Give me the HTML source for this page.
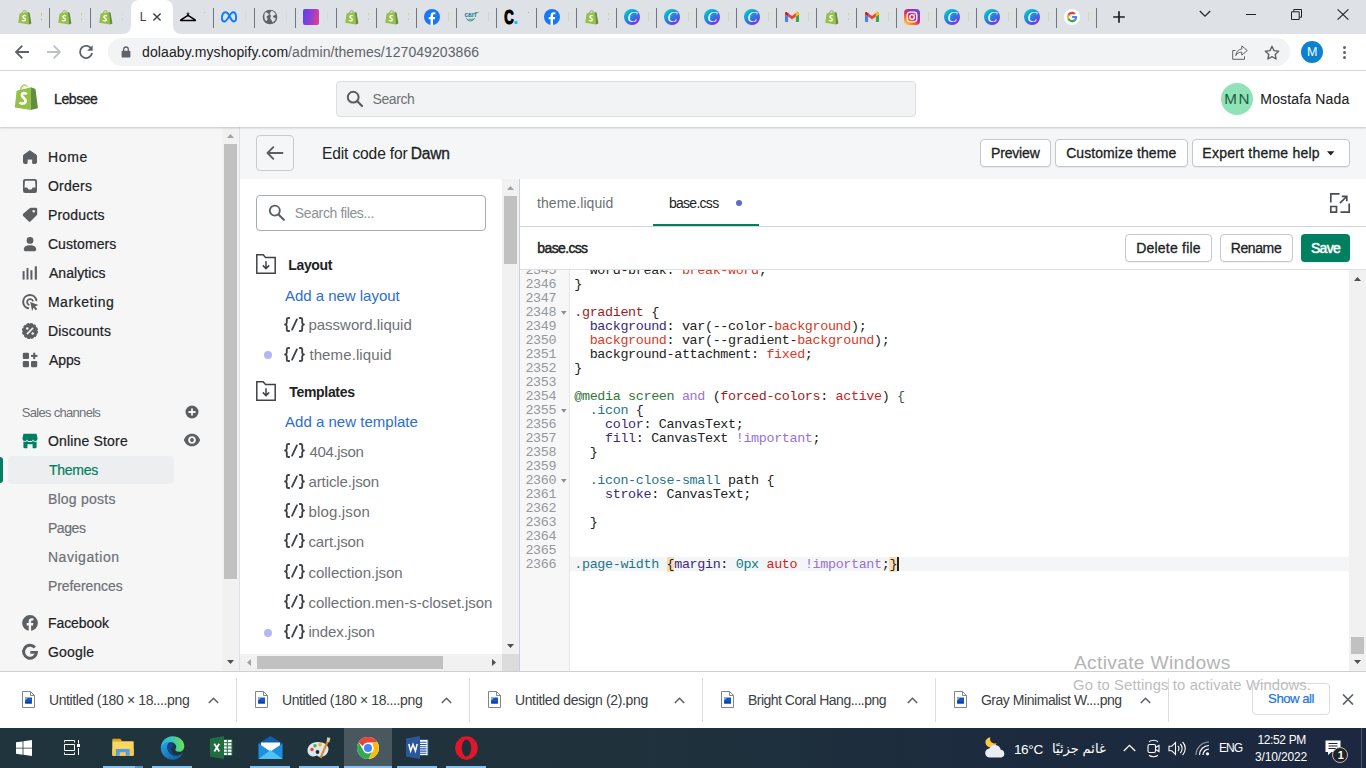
<!DOCTYPE html>
<html lang="en">
<head>
<meta charset="utf-8">
<title>Lebsee ~ Edit code ~ Shopify</title>
<style>
*{box-sizing:border-box;margin:0;padding:0}
html,body{width:1366px;height:768px;overflow:hidden;background:#fff}
body{font-family:"Liberation Sans","DejaVu Sans",sans-serif;color:#202223;position:relative;font-size:14px}
.abs{position:absolute}
.t{position:absolute;white-space:pre;line-height:20px;height:20px}
#tabstrip{position:absolute;left:0;top:0;width:1366px;height:34px;background:#dee1e6}
#toolbar{position:absolute;left:0;top:34px;width:1366px;height:37px;background:#fff;border-bottom:1px solid #d9dadc}
#omni{position:absolute;left:108px;top:38px;width:1182px;height:28px;border-radius:14px;background:#f1f3f4}
#topbar{position:absolute;left:0;top:71px;width:1366px;height:56px;background:#fff;box-shadow:0 1px 2px rgba(0,0,0,.2);z-index:5}
#search{position:absolute;left:336px;top:81px;width:580px;height:36px;border:1px solid #dcdee0;border-radius:4px;background:#f2f3f4;z-index:6}
#avatar{position:absolute;left:1221px;top:83px;width:32px;height:32px;border-radius:16px;background:#8fe3b6;z-index:6}
#nav{position:absolute;left:0;top:127px;width:222px;height:544px;background:#f6f6f7}
#main{position:absolute;left:240px;top:127px;width:1126px;height:544px;background:#f4f6f8}
.btn{position:absolute;border:1px solid #c4c8cc;border-radius:4px;background:#fff;box-shadow:0 1px 0 rgba(0,0,0,.05)}
#files{position:absolute;left:240px;top:179px;width:262px;height:475px;background:#fff}
#editor{position:absolute;left:520px;top:179px;width:846px;height:492px;background:#fff}
#code{position:absolute;left:520px;top:270px;width:830px;height:401px;overflow:hidden;background:#fff;font-family:"Liberation Mono","DejaVu Sans Mono",monospace;font-size:13.4px;line-height:14px;letter-spacing:-0.351px}
#gutter{position:absolute;left:0;top:0;width:50px;height:401px;background:#f7f7f7;border-right:1px solid #e6e6e6}
.ln{position:absolute;left:5.4px;color:#95989b;white-space:pre}
.cl{position:absolute;left:54.3px;white-space:pre;color:#202223}
.r{color:#a01b1b}.r2{color:#c81e1e}.p{color:#3c2a78}.t2{color:#1a6e7a}.v{color:#9a70d6}.n{color:#0c7c86}.o{color:#d8391f}.g{color:#33743a}.g2{color:#3a5a3a}
.cl .t{position:static;color:#1f7587;line-height:14px;height:auto}
.hl{background:#fbdcb0}
#dl{position:absolute;left:0;top:671px;width:1366px;height:57px;background:#fff;border-top:1px solid #cfcfcf}
#task{position:absolute;left:0;top:728px;width:1366px;height:40px;background:linear-gradient(90deg,#20343d 0%,#1f323c 45%,#1c2a3e 75%,#1b2840 100%)}
</style>
</head>
<body>
<div id="tabstrip">
<div class="abs" style="left:48.8px;top:7.500px;width:1.200px;height:20px;background:#73767c"></div>
<div class="abs" style="left:89.9px;top:7.500px;width:1.200px;height:20px;background:#73767c"></div>
<div class="abs" style="left:212.9px;top:7.500px;width:1.200px;height:20px;background:#73767c"></div>
<div class="abs" style="left:253.9px;top:7.500px;width:1.200px;height:20px;background:#73767c"></div>
<div class="abs" style="left:294.9px;top:7.500px;width:1.200px;height:20px;background:#73767c"></div>
<div class="abs" style="left:335.8px;top:7.500px;width:1.200px;height:20px;background:#73767c"></div>
<div class="abs" style="left:375.8px;top:7.500px;width:1.200px;height:20px;background:#73767c"></div>
<div class="abs" style="left:415.8px;top:7.500px;width:1.200px;height:20px;background:#73767c"></div>
<div class="abs" style="left:455.8px;top:7.500px;width:1.200px;height:20px;background:#73767c"></div>
<div class="abs" style="left:495.8px;top:7.500px;width:1.200px;height:20px;background:#73767c"></div>
<div class="abs" style="left:535.8px;top:7.500px;width:1.200px;height:20px;background:#73767c"></div>
<div class="abs" style="left:575.8px;top:7.500px;width:1.200px;height:20px;background:#73767c"></div>
<div class="abs" style="left:615.8px;top:7.500px;width:1.200px;height:20px;background:#73767c"></div>
<div class="abs" style="left:655.8px;top:7.500px;width:1.200px;height:20px;background:#73767c"></div>
<div class="abs" style="left:695.8px;top:7.500px;width:1.200px;height:20px;background:#73767c"></div>
<div class="abs" style="left:735.8px;top:7.500px;width:1.200px;height:20px;background:#73767c"></div>
<div class="abs" style="left:775.8px;top:7.500px;width:1.200px;height:20px;background:#73767c"></div>
<div class="abs" style="left:815.8px;top:7.500px;width:1.200px;height:20px;background:#73767c"></div>
<div class="abs" style="left:855.8px;top:7.500px;width:1.200px;height:20px;background:#73767c"></div>
<div class="abs" style="left:895.8px;top:7.500px;width:1.200px;height:20px;background:#73767c"></div>
<div class="abs" style="left:935.8px;top:7.500px;width:1.200px;height:20px;background:#73767c"></div>
<div class="abs" style="left:975.8px;top:7.500px;width:1.200px;height:20px;background:#73767c"></div>
<div class="abs" style="left:1015.8px;top:7.500px;width:1.200px;height:20px;background:#73767c"></div>
<div class="abs" style="left:1055.8px;top:7.500px;width:1.200px;height:20px;background:#73767c"></div>
<div class="abs" style="left:1095.8px;top:7.500px;width:1.200px;height:20px;background:#73767c"></div>
<div class="abs" style="left:131px;top:0;width:42px;height:34px;background:#fff;border-radius:8px 8px 0 0"></div>
<svg class="abs" style="left:123px;top:26px;width:8px;height:8px" viewBox="0 0 8 8"><path fill="#fff" d="M8 0v8H0A8 8 0 0 0 8 0z"/></svg>
<svg class="abs" style="left:173px;top:26px;width:8px;height:8px" viewBox="0 0 8 8"><path fill="#fff" d="M0 0v8h8A8 8 0 0 1 0 0z"/></svg>
<svg class="abs" style="left:16.5px;top:9px;width:16px;height:16px" viewBox="0 0 16 16"><path fill="none" stroke="#7fa83a" stroke-width="0.9" d="M5.300 4.300C5.300 1.700 8.600 0.500 9.700 3.400"/><path fill="#95bf47" d="M2.600 4.400L10.900 3.100 12 15.400 1.200 13.700z"/><path fill="#5e8e3e" d="M10.900 3.100l1.700.6 1.800 10.700-2.400 1z"/><path fill="none" stroke="#fff" stroke-width="1.350" d="M8.700 7.100C7.900 6.200 5.700 6.400 5.900 7.900 6.100 9.300 8.500 9.100 8.300 10.900 8.100 12.300 5.700 12.200 4.800 11.100"/></svg>
<span class="abs" style="left:40.4px;top:9px;width:1.600px;height:16px;overflow:hidden;font-size:12px;line-height:16px;color:#c98a4a;opacity:.8">S</span>
<svg class="abs" style="left:56.9px;top:9px;width:16px;height:16px" viewBox="0 0 16 16"><path fill="none" stroke="#7fa83a" stroke-width="0.9" d="M5.300 4.300C5.300 1.700 8.600 0.500 9.700 3.400"/><path fill="#95bf47" d="M2.600 4.400L10.900 3.100 12 15.400 1.200 13.700z"/><path fill="#5e8e3e" d="M10.900 3.100l1.700.6 1.800 10.700-2.400 1z"/><path fill="none" stroke="#fff" stroke-width="1.350" d="M8.700 7.100C7.900 6.200 5.700 6.400 5.900 7.900 6.100 9.300 8.500 9.100 8.300 10.900 8.100 12.300 5.700 12.200 4.800 11.100"/></svg>
<span class="abs" style="left:80.8px;top:9px;width:1.600px;height:16px;overflow:hidden;font-size:12px;line-height:16px;color:#c98a4a;opacity:.8">S</span>
<svg class="abs" style="left:98.0px;top:9px;width:16px;height:16px" viewBox="0 0 16 16"><path fill="none" stroke="#7fa83a" stroke-width="0.9" d="M5.300 4.300C5.300 1.700 8.600 0.500 9.700 3.400"/><path fill="#95bf47" d="M2.600 4.400L10.900 3.100 12 15.400 1.200 13.700z"/><path fill="#5e8e3e" d="M10.900 3.100l1.700.6 1.800 10.700-2.400 1z"/><path fill="none" stroke="#fff" stroke-width="1.350" d="M8.700 7.100C7.900 6.200 5.700 6.400 5.900 7.900 6.100 9.300 8.500 9.100 8.300 10.900 8.100 12.300 5.700 12.200 4.800 11.100"/></svg>
<span class="abs" style="left:121.9px;top:9px;width:1.600px;height:16px;overflow:hidden;font-size:12px;line-height:16px;color:#c98a4a;opacity:.8">S</span>
<span class="t" style="left:139.70px;top:7.34px;font-size:12px;color:#3c4043;">L</span>
<svg class="abs" style="left:152px;top:12px;width:10px;height:10px" viewBox="0 0 10 10"><path stroke="#3c4043" stroke-width="1.400" d="M1.400 1.400l7.200 7.200M8.600 1.400L1.400 8.600"/></svg>
<svg class="abs" style="left:180.0px;top:9px;width:16px;height:16px" viewBox="0 0 16 16"><circle cx="8" cy="4.800" r=".9" fill="none" stroke="#000" stroke-width="1"/><path fill="none" stroke="#000" stroke-width="1.500" stroke-linejoin="round" stroke-linecap="round" d="M8 6.300L.9 10.900c-.5.300-.3.700.2.700H14.900c.5 0 .7-.4.200-.7z"/></svg>
<span class="abs" style="left:203.9px;top:9px;width:1.600px;height:16px;overflow:hidden;font-size:12px;line-height:16px;color:#c9908a;opacity:.8">Y</span>
<svg class="abs" style="left:221.0px;top:9px;width:16px;height:16px" viewBox="0 0 16 16"><path fill="none" stroke="#0a7cff" stroke-width="1.900" d="M8 6C6.800 3.800 5.600 3.300 4.400 3.300 2.300 3.300.9 6 .9 9c0 2.200 1 3.500 2.500 3.500C5 12.500 6 11 8 7.500 10 4 11 3.300 12.200 3.300 14 3.300 15.100 6 15.100 9c0 2.200-.9 3.500-2.300 3.500C11.300 12.500 10.200 11 8 6z"/></svg>
<span class="abs" style="left:244.9px;top:9px;width:1.600px;height:16px;overflow:hidden;font-size:12px;line-height:16px;color:#c9908a;opacity:.8">I</span>
<svg class="abs" style="left:262.0px;top:9px;width:16px;height:16px" viewBox="0 0 16 16"><circle cx="8" cy="8" r="7.300" fill="#5f6368"/><path fill="#dee1e6" d="M3 3.500c1.500-.2 2.700.3 3.500 1.300.6.800 0 1.700-.9 2-1 .3-1.300 1.300-.6 2 .8.800.7 1.800.1 2.800-.4.700-1 .6-1.500 0C2.300 10 1.800 7 3 3.500zM9.500 1.800c2 .5 3.700 2 4.300 4-.9.600-1.900.4-2.600 1.200-.7.800.3 1.700 1.300 1.700.9 0 1.300.8.900 1.700-.6 1.300-1.600 2.200-2.900 2.800-.7-.7-.5-1.700-1.300-2.400-.8-.8-1.300-1.700-.6-2.700.6-.8.400-1.700-.4-2.300-.8-.6-.3-1.900.3-2.600.4-.5.600-1 1-1.400z"/></svg>
<span class="abs" style="left:285.9px;top:9px;width:1.600px;height:16px;overflow:hidden;font-size:12px;line-height:16px;color:#c9908a;opacity:.8">I</span>
<div class="abs" style="left:303.0px;top:9px;width:16px;height:16px;border-radius:2px;background:linear-gradient(100deg,#5d3df0 0%,#8a3fd6 45%,#ea3f8a 100%)"></div>
<span class="abs" style="left:326.9px;top:9px;width:1.600px;height:16px;overflow:hidden;font-size:12px;line-height:16px;color:#c9908a;opacity:.8">I</span>
<svg class="abs" style="left:343.9px;top:9px;width:16px;height:16px" viewBox="0 0 16 16"><path fill="none" stroke="#7fa83a" stroke-width="0.9" d="M5.300 4.300C5.300 1.700 8.600 0.500 9.700 3.400"/><path fill="#95bf47" d="M2.600 4.400L10.900 3.100 12 15.400 1.200 13.700z"/><path fill="#5e8e3e" d="M10.900 3.100l1.700.6 1.800 10.700-2.400 1z"/><path fill="none" stroke="#fff" stroke-width="1.350" d="M8.700 7.100C7.900 6.200 5.700 6.400 5.900 7.900 6.100 9.300 8.500 9.100 8.300 10.900 8.100 12.300 5.700 12.200 4.800 11.100"/></svg>
<span class="abs" style="left:367.8px;top:9px;width:1.600px;height:16px;overflow:hidden;font-size:12px;line-height:16px;color:#c98a4a;opacity:.8">S</span>
<svg class="abs" style="left:383.9px;top:9px;width:16px;height:16px" viewBox="0 0 16 16"><path fill="none" stroke="#7fa83a" stroke-width="0.9" d="M5.300 4.300C5.300 1.700 8.600 0.500 9.700 3.400"/><path fill="#95bf47" d="M2.600 4.400L10.900 3.100 12 15.400 1.200 13.700z"/><path fill="#5e8e3e" d="M10.900 3.100l1.700.6 1.800 10.700-2.400 1z"/><path fill="none" stroke="#fff" stroke-width="1.350" d="M8.700 7.100C7.900 6.200 5.700 6.400 5.900 7.900 6.100 9.300 8.500 9.100 8.300 10.900 8.100 12.300 5.700 12.200 4.800 11.100"/></svg>
<span class="abs" style="left:407.8px;top:9px;width:1.600px;height:16px;overflow:hidden;font-size:12px;line-height:16px;color:#c98a4a;opacity:.8">S</span>
<svg class="abs" style="left:423.9px;top:9px;width:16px;height:16px" viewBox="0 0 16 16"><circle cx="8" cy="8" r="8" fill="#1877f2"/><path fill="#fff" d="M9 16V10.300h1.900l.35-2.300H9V6.600c0-.7.300-1.250 1.300-1.250h1.050V3.400c-.5-.08-1.100-.15-1.700-.15-1.900 0-3.050 1.150-3.050 3.150V8H4.700v2.300h1.900V16z"/></svg>
<span class="abs" style="left:447.8px;top:9px;width:1.600px;height:16px;overflow:hidden;font-size:12px;line-height:16px;color:#c9908a;opacity:.8">I</span>
<svg class="abs" style="left:463.9px;top:9px;width:16px;height:16px" viewBox="0 0 16 16"><text x="0.500" y="7.800" font-family="Liberation Sans,sans-serif" font-size="6.500" font-weight="bold" fill="#1a7f95">carf</text><path fill="none" stroke="#1a7f95" stroke-width="1" d="M2.500 9.300c1.500 3.500 6.500 3.500 8-.3"/><path fill="none" stroke="#4caf50" stroke-width="1" d="M11 3.500h3.500M4.500 10.300h5"/></svg>
<span class="abs" style="left:487.8px;top:9px;width:1.600px;height:16px;overflow:hidden;font-size:12px;line-height:16px;color:#c9908a;opacity:.8">I</span>
<svg class="abs" style="left:503.9px;top:9px;width:16px;height:16px" viewBox="0 0 16 16"><text transform="translate(0.300 15.300) scale(0.640 1)" font-family="Liberation Sans,sans-serif" font-size="20.500" font-weight="bold" fill="#000" stroke="#000" stroke-width="1.200">C</text><rect x="10.500" y="12" width="3" height="3" fill="#16c1f3"/></svg>
<span class="abs" style="left:527.8px;top:9px;width:1.600px;height:16px;overflow:hidden;font-size:12px;line-height:16px;color:#c9908a;opacity:.8">T</span>
<svg class="abs" style="left:543.9px;top:9px;width:16px;height:16px" viewBox="0 0 16 16"><circle cx="8" cy="8" r="8" fill="#1877f2"/><path fill="#fff" d="M9 16V10.300h1.900l.35-2.300H9V6.600c0-.7.300-1.250 1.300-1.250h1.050V3.400c-.5-.08-1.100-.15-1.700-.15-1.900 0-3.050 1.150-3.050 3.150V8H4.700v2.300h1.900V16z"/></svg>
<span class="abs" style="left:567.8px;top:9px;width:1.600px;height:16px;overflow:hidden;font-size:12px;line-height:16px;color:#c9908a;opacity:.8">I</span>
<svg class="abs" style="left:583.9px;top:9px;width:16px;height:16px" viewBox="0 0 16 16"><path fill="none" stroke="#7fa83a" stroke-width="0.9" d="M5.300 4.300C5.300 1.700 8.600 0.500 9.700 3.400"/><path fill="#95bf47" d="M2.600 4.400L10.900 3.100 12 15.400 1.200 13.700z"/><path fill="#5e8e3e" d="M10.900 3.100l1.700.6 1.800 10.700-2.400 1z"/><path fill="none" stroke="#fff" stroke-width="1.350" d="M8.700 7.100C7.900 6.200 5.700 6.400 5.900 7.900 6.100 9.300 8.500 9.100 8.300 10.900 8.100 12.300 5.700 12.200 4.800 11.100"/></svg>
<span class="abs" style="left:607.8px;top:9px;width:1.600px;height:16px;overflow:hidden;font-size:12px;line-height:16px;color:#c98a4a;opacity:.8">S</span>
<svg class="abs" style="left:623.9px;top:9px;width:16px;height:16px" viewBox="0 0 16 16"><defs><linearGradient id="cv0" x1="0.150" y1="0.100" x2="0.800" y2="0.950"><stop offset="0" stop-color="#00c4cc"/><stop offset="0.550" stop-color="#2a7de1"/><stop offset="1" stop-color="#7d2ae8"/></linearGradient></defs><circle cx="8" cy="8" r="8" fill="url(#cv0)"/><text x="8.300" y="13" text-anchor="middle" font-family="Liberation Serif,serif" font-style="italic" font-size="15" fill="#fff">C</text></svg>
<span class="abs" style="left:647.8px;top:9px;width:1.600px;height:16px;overflow:hidden;font-size:12px;line-height:16px;color:#c9908a;opacity:.8">I</span>
<svg class="abs" style="left:663.9px;top:9px;width:16px;height:16px" viewBox="0 0 16 16"><defs><linearGradient id="cv1" x1="0.150" y1="0.100" x2="0.800" y2="0.950"><stop offset="0" stop-color="#00c4cc"/><stop offset="0.550" stop-color="#2a7de1"/><stop offset="1" stop-color="#7d2ae8"/></linearGradient></defs><circle cx="8" cy="8" r="8" fill="url(#cv1)"/><text x="8.300" y="13" text-anchor="middle" font-family="Liberation Serif,serif" font-style="italic" font-size="15" fill="#fff">C</text></svg>
<span class="abs" style="left:687.8px;top:9px;width:1.600px;height:16px;overflow:hidden;font-size:12px;line-height:16px;color:#c9908a;opacity:.8">I</span>
<svg class="abs" style="left:703.9px;top:9px;width:16px;height:16px" viewBox="0 0 16 16"><defs><linearGradient id="cv2" x1="0.150" y1="0.100" x2="0.800" y2="0.950"><stop offset="0" stop-color="#00c4cc"/><stop offset="0.550" stop-color="#2a7de1"/><stop offset="1" stop-color="#7d2ae8"/></linearGradient></defs><circle cx="8" cy="8" r="8" fill="url(#cv2)"/><text x="8.300" y="13" text-anchor="middle" font-family="Liberation Serif,serif" font-style="italic" font-size="15" fill="#fff">C</text></svg>
<span class="abs" style="left:727.8px;top:9px;width:1.600px;height:16px;overflow:hidden;font-size:12px;line-height:16px;color:#c9908a;opacity:.8">I</span>
<svg class="abs" style="left:743.9px;top:9px;width:16px;height:16px" viewBox="0 0 16 16"><defs><linearGradient id="cv3" x1="0.150" y1="0.100" x2="0.800" y2="0.950"><stop offset="0" stop-color="#00c4cc"/><stop offset="0.550" stop-color="#2a7de1"/><stop offset="1" stop-color="#7d2ae8"/></linearGradient></defs><circle cx="8" cy="8" r="8" fill="url(#cv3)"/><text x="8.300" y="13" text-anchor="middle" font-family="Liberation Serif,serif" font-style="italic" font-size="15" fill="#fff">C</text></svg>
<span class="abs" style="left:767.8px;top:9px;width:1.600px;height:16px;overflow:hidden;font-size:12px;line-height:16px;color:#c9908a;opacity:.8">I</span>
<svg class="abs" style="left:783.9px;top:9px;width:16px;height:16px" viewBox="-1.100 -1.300 18.200 18.200"><path fill="#4285f4" d="M1 13.500h2.600V7.300L0 4.600v7.900c0 .55.450 1 1 1z"/><path fill="#34a853" d="M12.400 13.500H15c.55 0 1-.45 1-1V4.600l-3.600 2.700z"/><path fill="#fbbc04" d="M12.400 3.300v4L16 4.600V3.500c0-1.350-1.550-2.100-2.600-1.300z"/><path fill="#ea4335" d="M3.600 7.300v-4L8 6.600l4.400-3.300v4L8 10.600z"/><path fill="#c5221f" d="M0 3.500v1.100l3.600 2.700v-4l-1-.75C1.550 1.400 0 2.150 0 3.500z"/></svg>
<span class="abs" style="left:807.8px;top:9px;width:1.600px;height:16px;overflow:hidden;font-size:12px;line-height:16px;color:#c9908a;opacity:.8">I</span>
<svg class="abs" style="left:823.9px;top:9px;width:16px;height:16px" viewBox="0 0 16 16"><path fill="none" stroke="#7fa83a" stroke-width="0.9" d="M5.300 4.300C5.300 1.700 8.600 0.500 9.700 3.400"/><path fill="#95bf47" d="M2.600 4.400L10.900 3.100 12 15.400 1.200 13.700z"/><path fill="#5e8e3e" d="M10.900 3.100l1.700.6 1.800 10.700-2.400 1z"/><path fill="none" stroke="#fff" stroke-width="1.350" d="M8.700 7.100C7.900 6.200 5.700 6.400 5.900 7.900 6.100 9.300 8.500 9.100 8.300 10.900 8.100 12.300 5.700 12.200 4.800 11.100"/></svg>
<span class="abs" style="left:847.8px;top:9px;width:1.600px;height:16px;overflow:hidden;font-size:12px;line-height:16px;color:#c98a4a;opacity:.8">S</span>
<svg class="abs" style="left:863.9px;top:9px;width:16px;height:16px" viewBox="-1.100 -1.300 18.200 18.200"><path fill="#4285f4" d="M1 13.500h2.600V7.300L0 4.600v7.900c0 .55.450 1 1 1z"/><path fill="#34a853" d="M12.400 13.500H15c.55 0 1-.45 1-1V4.600l-3.600 2.700z"/><path fill="#fbbc04" d="M12.400 3.300v4L16 4.600V3.500c0-1.350-1.550-2.100-2.600-1.300z"/><path fill="#ea4335" d="M3.600 7.300v-4L8 6.600l4.400-3.300v4L8 10.600z"/><path fill="#c5221f" d="M0 3.500v1.100l3.600 2.700v-4l-1-.75C1.550 1.400 0 2.150 0 3.500z"/></svg>
<span class="abs" style="left:887.8px;top:9px;width:1.600px;height:16px;overflow:hidden;font-size:12px;line-height:16px;color:#c9908a;opacity:.8">I</span>
<svg class="abs" style="left:903.9px;top:9px;width:16px;height:16px" viewBox="0 0 16 16"><defs><linearGradient id="ig" x1="0.100" y1="1" x2="0.900" y2="0"><stop offset="0" stop-color="#feda75"/><stop offset="0.250" stop-color="#fa7e1e"/><stop offset="0.500" stop-color="#d62976"/><stop offset="0.750" stop-color="#962fbf"/><stop offset="1" stop-color="#4f5bd5"/></linearGradient></defs><rect width="16" height="16" rx="4" fill="url(#ig)"/><rect x="3.200" y="3.200" width="9.600" height="9.600" rx="2.700" fill="none" stroke="#fff" stroke-width="1.300"/><circle cx="8" cy="8" r="2.300" fill="none" stroke="#fff" stroke-width="1.300"/><circle cx="10.900" cy="5.100" r=".7" fill="#fff"/></svg>
<span class="abs" style="left:927.8px;top:9px;width:1.600px;height:16px;overflow:hidden;font-size:12px;line-height:16px;color:#c9908a;opacity:.8">I</span>
<svg class="abs" style="left:943.9px;top:9px;width:16px;height:16px" viewBox="0 0 16 16"><defs><linearGradient id="cv4" x1="0.150" y1="0.100" x2="0.800" y2="0.950"><stop offset="0" stop-color="#00c4cc"/><stop offset="0.550" stop-color="#2a7de1"/><stop offset="1" stop-color="#7d2ae8"/></linearGradient></defs><circle cx="8" cy="8" r="8" fill="url(#cv4)"/><text x="8.300" y="13" text-anchor="middle" font-family="Liberation Serif,serif" font-style="italic" font-size="15" fill="#fff">C</text></svg>
<span class="abs" style="left:967.8px;top:9px;width:1.600px;height:16px;overflow:hidden;font-size:12px;line-height:16px;color:#c9908a;opacity:.8">I</span>
<svg class="abs" style="left:983.9px;top:9px;width:16px;height:16px" viewBox="0 0 16 16"><defs><linearGradient id="cv5" x1="0.150" y1="0.100" x2="0.800" y2="0.950"><stop offset="0" stop-color="#00c4cc"/><stop offset="0.550" stop-color="#2a7de1"/><stop offset="1" stop-color="#7d2ae8"/></linearGradient></defs><circle cx="8" cy="8" r="8" fill="url(#cv5)"/><text x="8.300" y="13" text-anchor="middle" font-family="Liberation Serif,serif" font-style="italic" font-size="15" fill="#fff">C</text></svg>
<span class="abs" style="left:1007.8px;top:9px;width:1.600px;height:16px;overflow:hidden;font-size:12px;line-height:16px;color:#c9908a;opacity:.8">I</span>
<svg class="abs" style="left:1023.9px;top:9px;width:16px;height:16px" viewBox="0 0 16 16"><defs><linearGradient id="cv6" x1="0.150" y1="0.100" x2="0.800" y2="0.950"><stop offset="0" stop-color="#00c4cc"/><stop offset="0.550" stop-color="#2a7de1"/><stop offset="1" stop-color="#7d2ae8"/></linearGradient></defs><circle cx="8" cy="8" r="8" fill="url(#cv6)"/><text x="8.300" y="13" text-anchor="middle" font-family="Liberation Serif,serif" font-style="italic" font-size="15" fill="#fff">C</text></svg>
<span class="abs" style="left:1047.8px;top:9px;width:1.600px;height:16px;overflow:hidden;font-size:12px;line-height:16px;color:#c9908a;opacity:.8">I</span>
<svg class="abs" style="left:1063.9px;top:9px;width:16px;height:16px" viewBox="0 0 16 16"><circle cx="8" cy="8" r="8" fill="#fff"/><path fill="#4285f4" d="M13 8.150c0-.4-.03-.7-.1-1.050H8.100v1.950h2.800c-.1.650-.5 1.400-1.200 1.850l1.700 1.350C12.400 11.300 13 9.850 13 8.150z"/><path fill="#34a853" d="M8.100 13.200c1.400 0 2.550-.45 3.400-1.250l-1.700-1.350c-.45.300-1 .5-1.700.5-1.350 0-2.450-.9-2.850-2.100L3.500 10.350c.85 1.700 2.600 2.850 4.600 2.850z"/><path fill="#fbbc05" d="M5.250 9c-.1-.3-.15-.65-.15-1s.05-.7.150-1L3.500 5.650C3.150 6.350 2.950 7.150 2.950 8s.2 1.650.55 2.350z"/><path fill="#ea4335" d="M8.100 4.900c.95 0 1.600.4 1.950.75l1.500-1.450C10.650 3.350 9.500 2.800 8.100 2.800c-2 0-3.750 1.150-4.600 2.850L5.250 7c.4-1.200 1.500-2.100 2.850-2.100z"/></svg>
<span class="abs" style="left:1087.8px;top:9px;width:1.600px;height:16px;overflow:hidden;font-size:12px;line-height:16px;color:#c9908a;opacity:.8">I</span>
<svg class="abs" style="left:1112px;top:10px;width:14px;height:14px" viewBox="0 0 14 14"><path stroke="#202124" stroke-width="1.700" d="M7 1.200v11.600M1.200 7h11.600"/></svg>
<svg class="abs" style="left:1199px;top:9px;width:12px;height:10px" viewBox="0 0 12 10"><path fill="none" stroke="#202124" stroke-width="1.200" d="M.8 2l5.200 5.200L11.200 2"/></svg>
<div class="abs" style="left:1246px;top:14px;width:10px;height:1px;background:#202124"></div>
<svg class="abs" style="left:1291px;top:9px;width:11px;height:11px" viewBox="0 0 11 11"><path fill="none" stroke="#202124" stroke-width="1" d="M.5 2.800h7.700v7.700H.5zM2.800 2.800V.5h7.700v7.700H8.200"/></svg>
<svg class="abs" style="left:1337px;top:9px;width:12px;height:11px" viewBox="0 0 12 11"><path stroke="#202124" stroke-width="1.100" d="M.6.400l10.800 10.200M11.400.4L.6 10.600"/></svg>
</div>
<div id="toolbar"></div>
<svg class="abs" style="left:14px;top:44px;width:16px;height:16px" viewBox="0 0 16 16"><path fill="none" stroke="#5f6368" stroke-width="1.800" d="M15 8H2.500M8.300 1.700L2 8l6.300 6.300"/></svg>
<svg class="abs" style="left:46px;top:44px;width:16px;height:16px" viewBox="0 0 16 16"><path fill="none" stroke="#bdc1c6" stroke-width="1.800" d="M1 8h12.500M7.700 1.700L14 8l-6.300 6.300"/></svg>
<svg class="abs" style="left:78px;top:44px;width:16px;height:16px" viewBox="0 0 16 16"><path fill="none" stroke="#5f6368" stroke-width="1.800" d="M13.600 5.300A6.100 6.100 0 1 0 14.100 9"/><path fill="#5f6368" d="M14.600 1.300v5.500H9.100z"/></svg>
<div id="omni"></div>
<svg class="abs" style="left:121px;top:46px;width:10px;height:12px" viewBox="0 0 10 12"><path fill="none" stroke="#5f6368" stroke-width="1.300" d="M2.700 5V3.300a2.300 2.300 0 0 1 4.600 0V5"/><rect x=".6" y="4.700" width="8.800" height="6.800" rx="1" fill="#5f6368"/></svg>
<span class="t" style="left:142.10px;top:41.75px;font-size:14px;color:#202124;letter-spacing:0.090px;">dolaaby.myshopify.com</span>
<span class="t" style="left:288.10px;top:41.75px;font-size:14px;color:#5f6368;letter-spacing:0.072px;">/admin/themes/127049203866</span>
<svg class="abs" style="left:1232px;top:45px;width:16px;height:15px" viewBox="0 0 16 15"><path fill="none" stroke="#5f6368" stroke-width="1" stroke-linejoin="round" d="M3.500 5.500H.7v8.800h11.800v-3M9.800 4V.9l5.500 4.600-5.500 4.600V7.200C7.200 7.200 5 8 3.800 10.600 4.200 6.800 6.300 4.400 9.800 4z"/></svg>
<svg class="abs" style="left:1264px;top:45px;width:16px;height:15px" viewBox="0 0 16 15"><path fill="none" stroke="#5f6368" stroke-width="1.400" stroke-linejoin="round" d="M8 1.300l2 4.300 4.700.6-3.500 3.200.9 4.600L8 11.700l-4.100 2.300.9-4.600L1.300 6.200 6 5.600z"/></svg>
<div class="abs" style="left:1301px;top:41px;width:22px;height:22px;border-radius:11px;background:#0b82d1"></div>
<span class="t" style="left:1306.90px;top:41.97px;font-size:12.5px;color:#fff;">M</span>
<div class="abs" style="left:1343px;top:45.5px;width:3px;height:3px;border-radius:2px;background:#5f6368"></div>
<div class="abs" style="left:1343px;top:50.5px;width:3px;height:3px;border-radius:2px;background:#5f6368"></div>
<div class="abs" style="left:1343px;top:55.5px;width:3px;height:3px;border-radius:2px;background:#5f6368"></div>
<div id="topbar"></div>
<svg class="abs" style="left:14px;top:82px;width:25px;height:29px;z-index:6" viewBox="0 0 25 29"><path fill="none" stroke="#a9cf66" stroke-width="1.500" d="M6.700 8C7 3.500 11 1.300 13 4.500"/><path fill="none" stroke="#cfe6a6" stroke-width="1" d="M9.300 6.500C10 3.300 12.500 2.200 14.800 5"/><path fill="#95bf47" d="M2.600 8.700L17.100 5.200 16.600 28 .8 25.400z"/><path fill="#5e8e3e" d="M17.100 5.200l4.400 1.800 2.400 19.300-7.300 1.700z"/><path fill="none" stroke="#fff" stroke-width="2.600" d="M12.700 12.300C11.500 10.600 7.800 10.600 7.900 13.400 8 16 12 16 11.600 19.300 11.300 22 7.500 22.300 5.500 20.300"/></svg>
<span class="t" style="left:54.05px;top:89.35px;font-size:14px;color:#202223;letter-spacing:-0.420px;-webkit-text-stroke:0.3px;z-index:6;">Lebsee</span>
<div id="search"></div>
<svg class="abs" style="z-index:6;left:345px;top:89px;width:20px;height:20px" viewBox="0 0 20 20"><circle cx="8.200" cy="8.200" r="5.400" fill="none" stroke="#5c5f62" stroke-width="2"/><path stroke="#5c5f62" stroke-width="2.200" stroke-linecap="round" d="M12.300 12.300l4.700 4.700"/></svg>
<span class="t" style="left:372.60px;top:89.35px;font-size:14px;color:#6d7175;letter-spacing:-0.440px;z-index:6;">Search</span>
<div id="avatar"></div>
<span class="t" style="left:1224.20px;top:89.33px;font-size:15.2px;color:#1f5b45;letter-spacing:1.600px;z-index:6;">MN</span>
<span class="t" style="left:1260.35px;top:89.35px;font-size:14px;color:#202223;letter-spacing:0.164px;-webkit-text-stroke:0.1px;z-index:6;">Mostafa Nada</span>
<div id="nav"></div>
<span class="t" style="left:47.90px;top:147.15px;font-size:14px;color:#202223;letter-spacing:0.700px;-webkit-text-stroke:0.2px;">Home</span>
<span class="t" style="left:47.90px;top:176.15px;font-size:14px;color:#202223;letter-spacing:0.260px;-webkit-text-stroke:0.2px;">Orders</span>
<span class="t" style="left:47.90px;top:205.15px;font-size:14px;color:#202223;letter-spacing:0.200px;-webkit-text-stroke:0.2px;">Products</span>
<span class="t" style="left:47.90px;top:234.15px;font-size:14px;color:#202223;letter-spacing:0.100px;-webkit-text-stroke:0.2px;">Customers</span>
<span class="t" style="left:48.90px;top:263.15px;font-size:14px;color:#202223;letter-spacing:0.087px;-webkit-text-stroke:0.2px;">Analytics</span>
<span class="t" style="left:47.90px;top:292.15px;font-size:14px;color:#202223;letter-spacing:0.550px;-webkit-text-stroke:0.2px;">Marketing</span>
<span class="t" style="left:47.90px;top:321.15px;font-size:14px;color:#202223;letter-spacing:0.200px;-webkit-text-stroke:0.2px;">Discounts</span>
<span class="t" style="left:48.90px;top:350.15px;font-size:14px;color:#202223;letter-spacing:-0.067px;-webkit-text-stroke:0.2px;">Apps</span>
<svg class="abs" style="left:20px;top:147px;width:20px;height:20px" viewBox="0 0 20 20"><path fill="#5c5f62" stroke="#5c5f62" stroke-width="1" stroke-linejoin="round" d="M9.800 3.700L16.500 8.300V15.500a.9.900 0 0 1-.9.900H12.700V12.100H7.100V16.400H4.400a.9.900 0 0 1-.9-.9V8.300z"/></svg>
<svg class="abs" style="left:20px;top:176px;width:20px;height:20px" viewBox="0 0 20 20"><path fill="#5c5f62" fill-rule="evenodd" d="M5.200 2.900h9.600A2.200 2.200 0 0 1 17 5.100v9.700A2.200 2.200 0 0 1 14.800 17H5.200A2.200 2.200 0 0 1 3 14.800V5.100A2.200 2.200 0 0 1 5.200 2.900zM5.600 4.700a.7.700 0 0 0-.7.700L4.500 11.600H7.100L8.600 13.500h2.800l1.500-1.900h2.600L15.100 5.400a.7.700 0 0 0-.7-.7z"/></svg>
<svg class="abs" style="left:20px;top:205px;width:20px;height:20px" viewBox="0 0 20 20"><path fill="#5c5f62" fill-rule="evenodd" d="M10.800 2.800H16a1.200 1.200 0 0 1 1.200 1.200v5.200a1.600 1.600 0 0 1-.5 1.100l-6 6a1.600 1.600 0 0 1-2.200 0L3.200 11a1.600 1.600 0 0 1 0-2.200l6.500-5.500A1.600 1.600 0 0 1 10.800 2.800zM13.700 4.900a1.300 1.300 0 1 0 0 2.600 1.300 1.300 0 0 0 0-2.600z"/></svg>
<svg class="abs" style="left:20px;top:234px;width:20px;height:20px" viewBox="0 0 20 20"><circle cx="10" cy="6.400" r="3.400" fill="#5c5f62"/><path fill="#5c5f62" d="M3.800 15.300c0-2.700 2.800-4 6.200-4s6.200 1.300 6.200 4c0 1.400-.9 2-2.100 2H5.900c-1.200 0-2.100-.6-2.100-2z"/></svg>
<svg class="abs" style="left:20px;top:263px;width:20px;height:20px" viewBox="0 0 20 20"><g fill="#5c5f62"><rect x="2.600" y="8.100" width="2" height="8.500"/><rect x="6.500" y="5.100" width="2" height="11.500"/><rect x="10.400" y="7.200" width="2" height="9.400"/><rect x="14.800" y="3.300" width="2.100" height="13.300"/></g></svg>
<svg class="abs" style="left:20px;top:292px;width:20px;height:20px" viewBox="0 0 20 20"><path fill="none" stroke="#5c5f62" stroke-width="2" stroke-linecap="round" d="M16.400 8.200A6.700 6.700 0 1 0 8.200 16.200"/><path fill="none" stroke="#5c5f62" stroke-width="1.800" stroke-linecap="round" d="M12.800 8.700A3 3 0 1 0 8.700 12.700"/><path fill="#5c5f62" d="M10.200 10.100l8.200 2.800-3.400 1.600 2.300 2.400-1.400 1.300-2.300-2.400-1.500 3.300z"/></svg>
<svg class="abs" style="left:20px;top:321px;width:20px;height:20px" viewBox="0 0 20 20"><circle cx="10" cy="10" r="7.500" fill="#5c5f62" stroke="#5c5f62" stroke-width="1.100" stroke-dasharray="2.600 1.330"/><path stroke="#f6f6f7" stroke-width="1.600" stroke-linecap="round" d="M7.400 12.600l5.200-5.200"/><circle cx="7.300" cy="7.400" r="1.250" fill="#f6f6f7"/><circle cx="12.700" cy="12.600" r="1.250" fill="#f6f6f7"/></svg>
<svg class="abs" style="left:20px;top:350px;width:20px;height:20px" viewBox="0 0 20 20"><g fill="#5c5f62"><rect x="2.800" y="2.800" width="6.200" height="6.200" rx="1.200"/><rect x="2.800" y="11" width="6.200" height="6.200" rx="1.200"/><rect x="11" y="11" width="6.200" height="6.200" rx="1.200"/><rect x="13.200" y="2.700" width="2" height="6.400"/><rect x="11" y="4.900" width="6.400" height="2"/></g></svg>
<span class="t" style="left:21.70px;top:402.80px;font-size:13px;color:#6d7175;letter-spacing:-0.692px;">Sales channels</span>
<svg class="abs" style="left:184px;top:404px;width:16px;height:16px" viewBox="0 0 16 16"><circle cx="8" cy="8" r="6.500" fill="#5c5f62"/><path stroke="#f6f6f7" stroke-width="1.800" d="M8 4.500v7M4.500 8h7"/></svg>
<svg class="abs" style="left:20px;top:431px;width:20px;height:20px" viewBox="0 0 20 20"><path fill="#008060" d="M3.500 2.800h13l1 4.200v.9a2.300 2.300 0 0 1-4.500.5 2.350 2.350 0 0 1-3 1.500 2.350 2.350 0 0 1-3-1.500 2.300 2.300 0 0 1-4.500-.5V7z"/><path fill="#008060" d="M3.400 10.600c1.500.5 2.700.2 3.600-.7.900.9 2 1.200 3 1.200s2.100-.3 3-1.200c.9.900 2.100 1.200 3.600.7v5.500a1.200 1.200 0 0 1-1.200 1.200H12.600v-4H7.400v4H4.600a1.200 1.200 0 0 1-1.200-1.200z"/></svg>
<span class="t" style="left:47.90px;top:431.15px;font-size:14px;color:#202223;letter-spacing:0.182px;-webkit-text-stroke:0.2px;">Online Store</span>
<svg class="abs" style="left:183px;top:431px;width:18px;height:18px" viewBox="0 0 18 18"><path fill="#5c5f62" fill-rule="evenodd" d="M9 2.700c4 0 6.900 2.700 8.100 6.300-1.200 3.600-4.100 6.300-8.100 6.300S2.100 12.600.9 9C2.100 5.400 5 2.700 9 2.700zM9 5.200a3.800 3.800 0 1 0 0 7.600 3.800 3.800 0 0 0 0-7.600zm0 1.900a1.900 1.900 0 1 1 0 3.800 1.900 1.900 0 0 1 0-3.800z"/></svg>
<div class="abs" style="left:0;top:457px;width:3px;height:26px;background:#008060;border-radius:0 3px 3px 0"></div>
<div class="abs" style="left:8px;top:456px;width:166px;height:28px;background:#edeeef;border-radius:4px"></div>
<span class="t" style="left:48.90px;top:459.95px;font-size:14px;color:#007f5f;letter-spacing:-0.240px;-webkit-text-stroke:0.2px;">Themes</span>
<span class="t" style="left:47.90px;top:488.85px;font-size:14px;color:#6d7175;letter-spacing:0.244px;-webkit-text-stroke:0.2px;">Blog posts</span>
<span class="t" style="left:47.90px;top:517.85px;font-size:14px;color:#6d7175;letter-spacing:-0.425px;-webkit-text-stroke:0.2px;">Pages</span>
<span class="t" style="left:47.90px;top:546.85px;font-size:14px;color:#6d7175;letter-spacing:0.556px;-webkit-text-stroke:0.2px;">Navigation</span>
<span class="t" style="left:47.90px;top:576.05px;font-size:14px;color:#6d7175;letter-spacing:-0.070px;-webkit-text-stroke:0.2px;">Preferences</span>
<svg class="abs" style="left:20px;top:613px;width:20px;height:20px" viewBox="0 0 20 20"><circle cx="10" cy="10" r="7.900" fill="#5c5f62"/><path fill="#f6f6f7" d="M11.100 17.900v-5.500h1.900l.35-2.300H11.100V8.700c0-.7.300-1.200 1.300-1.200h1.050V5.500c-.5-.07-1.100-.13-1.700-.13-1.900 0-3.050 1.100-3.050 3.100v1.650H6.700v2.300h2v5.500z"/></svg>
<span class="t" style="left:47.90px;top:612.85px;font-size:14px;color:#202223;letter-spacing:-0.043px;-webkit-text-stroke:0.2px;">Facebook</span>
<svg class="abs" style="left:20px;top:642px;width:20px;height:20px" viewBox="0 0 20 20"><path fill="none" stroke="#5c5f62" stroke-width="2.900" d="M14.900 5.500A6.450 6.450 0 1 0 16.450 10.400H10.300"/></svg>
<span class="t" style="left:47.90px;top:641.95px;font-size:14px;color:#202223;letter-spacing:0.220px;-webkit-text-stroke:0.2px;">Google</span>
<div class="abs" style="left:222px;top:127px;width:17px;height:544px;background:#f1f1f1"></div>
<div class="abs" style="left:239px;top:127px;width:1px;height:544px;background:#dde0e4"></div>
<div class="abs" style="left:224px;top:144px;width:13px;height:435px;background:#c1c1c1"></div>
<svg class="abs" style="left:227px;top:134px;width:7px;height:4px" viewBox="0 0 7 4"><path fill="#a3a3a3" d="M0 4L3.500 0 7 4z"/></svg>
<svg class="abs" style="left:227px;top:660px;width:7px;height:4px" viewBox="0 0 7 4"><path fill="#505050" d="M0 0L3.500 4 7 0z"/></svg>
<div id="main"></div>
<div class="abs" style="left:256px;top:135px;width:38px;height:36px;border:1px solid #c9cccf;border-radius:4px"></div>
<svg class="abs" style="left:266px;top:146px;width:18px;height:14px;" viewBox="0 0 18 14"><path fill="none" stroke="#5c5f62" stroke-width="1.900" stroke-linecap="round" stroke-linejoin="round" d="M16.500 7H1.500M7.300 1.200L1.500 7l5.800 5.800"/></svg>
<span class="t" style="left:322.00px;top:143.89px;font-size:15.6px;color:#202223;letter-spacing:-0.150px;">Edit code for</span>
<span class="t" style="left:410.85px;top:143.89px;font-size:15.6px;color:#202223;letter-spacing:-0.267px;-webkit-text-stroke:0.3px;">Dawn</span>
<div class="btn" style="left:980px;top:139px;width:71px;height:28px"></div>
<div class="btn" style="left:1055px;top:139px;width:133px;height:28px"></div>
<div class="btn" style="left:1192px;top:139px;width:158px;height:28px"></div>
<span class="t" style="left:990.95px;top:143.35px;font-size:14px;color:#202223;letter-spacing:-0.150px;-webkit-text-stroke:0.3px;">Preview</span>
<span class="t" style="left:1066.15px;top:143.35px;font-size:14px;color:#202223;letter-spacing:0.079px;-webkit-text-stroke:0.3px;">Customize theme</span>
<span class="t" style="left:1202.35px;top:143.35px;font-size:14px;color:#202223;letter-spacing:0.231px;-webkit-text-stroke:0.3px;">Expert theme help</span>
<svg class="abs" style="left:1327px;top:151px;width:8px;height:5px;" viewBox="0 0 8 5"><path fill="#202223" d="M0 .3h7.400L3.700 4.600z"/></svg>
<div id="files"></div>
<div class="abs" style="left:256px;top:195px;width:230px;height:36px;border:1px solid #a7acb1;border-radius:4px;background:#fff"></div>
<svg class="abs" style="left:268px;top:204px;width:18px;height:17px;" viewBox="0 0 18 17"><circle cx="6.800" cy="6.600" r="5" fill="none" stroke="#5c5f62" stroke-width="1.900"/><path stroke="#5c5f62" stroke-width="2.100" stroke-linecap="round" d="M10.500 10.400l5.300 5.300"/></svg>
<span class="t" style="left:294.80px;top:203.15px;font-size:14px;color:#8c9196;letter-spacing:-0.371px;">Search files...</span>
<svg class="abs" style="left:256px;top:254px;width:20px;height:20px;" viewBox="0 0 20 20"><path fill="none" stroke="#3f4346" stroke-width="1.500" stroke-linejoin="miter" d="M.8.800h6.400l2.300 2.600h9.700v15.800H.8z"/><path fill="none" stroke="#3f4346" stroke-width="1.500" d="M10 7.200v7.300M6.800 11.400l3.200 3.200 3.200-3.200"/></svg>
<span class="t" style="left:288.20px;top:254.85px;font-size:14px;color:#202223;font-weight:bold;letter-spacing:-0.320px;">Layout</span>
<span class="t" style="left:285.00px;top:285.60px;font-size:15px;color:#2c6ecb;letter-spacing:-0.027px;">Add a new layout</span>
<svg class="abs" style="left:283.5px;top:316.5px;width:21px;height:15px;" viewBox="0 0 21 15"><g fill="none" stroke="#3f4346" stroke-width="1.850" stroke-linecap="round" stroke-linejoin="round"><path d="M5.200 1H4.400A1.600 1.600 0 0 0 2.800 2.600v2.900c0 1-.6 1.800-1.700 2 1.100.2 1.700 1 1.700 2v2.900A1.600 1.600 0 0 0 4.400 14h.8"/><path d="M15.800 1h.8a1.600 1.600 0 0 1 1.600 1.600v2.900c0 1 .6 1.800 1.700 2-1.100.2-1.700 1-1.700 2v2.900A1.600 1.600 0 0 1 16.600 14h-.8"/><path d="M12.900 2.400L8.100 12.600"/></g></svg>
<span class="t" style="left:308.40px;top:314.80px;font-size:15px;color:#6d7175;">password.liquid</span>
<svg class="abs" style="left:283.5px;top:346.7px;width:21px;height:15px;" viewBox="0 0 21 15"><g fill="none" stroke="#3f4346" stroke-width="1.850" stroke-linecap="round" stroke-linejoin="round"><path d="M5.200 1H4.400A1.600 1.600 0 0 0 2.800 2.600v2.900c0 1-.6 1.800-1.700 2 1.100.2 1.700 1 1.700 2v2.900A1.600 1.600 0 0 0 4.400 14h.8"/><path d="M15.800 1h.8a1.600 1.600 0 0 1 1.600 1.600v2.900c0 1 .6 1.800 1.700 2-1.100.2-1.700 1-1.700 2v2.900A1.600 1.600 0 0 1 16.600 14h-.8"/><path d="M12.900 2.400L8.100 12.600"/></g></svg>
<span class="t" style="left:309.40px;top:345.00px;font-size:15px;color:#6d7175;letter-spacing:0.109px;">theme.liquid</span>
<div class="abs" style="left:264px;top:351.2px;width:8px;height:8px;border-radius:4px;background:#b3b7f3"></div>
<svg class="abs" style="left:283.5px;top:443.3px;width:21px;height:15px;" viewBox="0 0 21 15"><g fill="none" stroke="#3f4346" stroke-width="1.850" stroke-linecap="round" stroke-linejoin="round"><path d="M5.200 1H4.400A1.600 1.600 0 0 0 2.800 2.600v2.900c0 1-.6 1.800-1.700 2 1.100.2 1.700 1 1.700 2v2.900A1.600 1.600 0 0 0 4.400 14h.8"/><path d="M15.800 1h.8a1.600 1.600 0 0 1 1.600 1.600v2.900c0 1 .6 1.800 1.700 2-1.100.2-1.700 1-1.700 2v2.900A1.600 1.600 0 0 1 16.600 14h-.8"/><path d="M12.900 2.400L8.100 12.600"/></g></svg>
<span class="t" style="left:309.40px;top:441.60px;font-size:15px;color:#6d7175;letter-spacing:-0.329px;">404.json</span>
<svg class="abs" style="left:283.5px;top:473.5px;width:21px;height:15px;" viewBox="0 0 21 15"><g fill="none" stroke="#3f4346" stroke-width="1.850" stroke-linecap="round" stroke-linejoin="round"><path d="M5.200 1H4.400A1.600 1.600 0 0 0 2.800 2.600v2.900c0 1-.6 1.800-1.700 2 1.100.2 1.700 1 1.700 2v2.900A1.600 1.600 0 0 0 4.400 14h.8"/><path d="M15.800 1h.8a1.600 1.600 0 0 1 1.600 1.600v2.900c0 1 .6 1.800 1.700 2-1.100.2-1.700 1-1.700 2v2.900A1.600 1.600 0 0 1 16.600 14h-.8"/><path d="M12.900 2.400L8.100 12.600"/></g></svg>
<span class="t" style="left:308.40px;top:471.80px;font-size:15px;color:#6d7175;letter-spacing:-0.082px;">article.json</span>
<svg class="abs" style="left:283.5px;top:503.29999999999995px;width:21px;height:15px;" viewBox="0 0 21 15"><g fill="none" stroke="#3f4346" stroke-width="1.850" stroke-linecap="round" stroke-linejoin="round"><path d="M5.200 1H4.400A1.600 1.600 0 0 0 2.800 2.600v2.900c0 1-.6 1.800-1.700 2 1.100.2 1.700 1 1.700 2v2.900A1.600 1.600 0 0 0 4.400 14h.8"/><path d="M15.800 1h.8a1.600 1.600 0 0 1 1.600 1.600v2.900c0 1 .6 1.800 1.700 2-1.100.2-1.700 1-1.700 2v2.900A1.600 1.600 0 0 1 16.600 14h-.8"/><path d="M12.900 2.400L8.100 12.600"/></g></svg>
<span class="t" style="left:308.40px;top:501.60px;font-size:15px;color:#6d7175;letter-spacing:0.162px;">blog.json</span>
<svg class="abs" style="left:283.5px;top:533.3px;width:21px;height:15px;" viewBox="0 0 21 15"><g fill="none" stroke="#3f4346" stroke-width="1.850" stroke-linecap="round" stroke-linejoin="round"><path d="M5.200 1H4.400A1.600 1.600 0 0 0 2.800 2.600v2.900c0 1-.6 1.800-1.700 2 1.100.2 1.700 1 1.700 2v2.900A1.600 1.600 0 0 0 4.400 14h.8"/><path d="M15.800 1h.8a1.600 1.600 0 0 1 1.600 1.600v2.900c0 1 .6 1.800 1.700 2-1.100.2-1.700 1-1.700 2v2.900A1.600 1.600 0 0 1 16.600 14h-.8"/><path d="M12.900 2.400L8.100 12.600"/></g></svg>
<span class="t" style="left:308.40px;top:531.60px;font-size:15px;color:#6d7175;letter-spacing:-0.112px;">cart.json</span>
<svg class="abs" style="left:283.5px;top:564.2px;width:21px;height:15px;" viewBox="0 0 21 15"><g fill="none" stroke="#3f4346" stroke-width="1.850" stroke-linecap="round" stroke-linejoin="round"><path d="M5.200 1H4.400A1.600 1.600 0 0 0 2.800 2.600v2.900c0 1-.6 1.800-1.700 2 1.100.2 1.700 1 1.700 2v2.900A1.600 1.600 0 0 0 4.400 14h.8"/><path d="M15.800 1h.8a1.600 1.600 0 0 1 1.600 1.600v2.900c0 1 .6 1.800 1.700 2-1.100.2-1.700 1-1.700 2v2.900A1.600 1.600 0 0 1 16.600 14h-.8"/><path d="M12.900 2.400L8.100 12.600"/></g></svg>
<span class="t" style="left:308.40px;top:562.50px;font-size:15px;color:#6d7175;letter-spacing:0.007px;">collection.json</span>
<svg class="abs" style="left:283.5px;top:594.2px;width:21px;height:15px;" viewBox="0 0 21 15"><g fill="none" stroke="#3f4346" stroke-width="1.850" stroke-linecap="round" stroke-linejoin="round"><path d="M5.200 1H4.400A1.600 1.600 0 0 0 2.800 2.600v2.900c0 1-.6 1.800-1.700 2 1.100.2 1.700 1 1.700 2v2.900A1.600 1.600 0 0 0 4.400 14h.8"/><path d="M15.800 1h.8a1.600 1.600 0 0 1 1.600 1.600v2.900c0 1 .6 1.800 1.700 2-1.100.2-1.700 1-1.700 2v2.900A1.600 1.600 0 0 1 16.600 14h-.8"/><path d="M12.900 2.400L8.100 12.600"/></g></svg>
<span class="t" style="left:308.40px;top:592.50px;font-size:15px;color:#6d7175;letter-spacing:-0.007px;">collection.men-s-closet.json</span>
<svg class="abs" style="left:283.5px;top:624.1px;width:21px;height:15px;" viewBox="0 0 21 15"><g fill="none" stroke="#3f4346" stroke-width="1.850" stroke-linecap="round" stroke-linejoin="round"><path d="M5.200 1H4.400A1.600 1.600 0 0 0 2.800 2.600v2.900c0 1-.6 1.800-1.700 2 1.100.2 1.700 1 1.700 2v2.900A1.600 1.600 0 0 0 4.400 14h.8"/><path d="M15.800 1h.8a1.600 1.600 0 0 1 1.600 1.600v2.900c0 1 .6 1.800 1.700 2-1.100.2-1.700 1-1.700 2v2.900A1.600 1.600 0 0 1 16.600 14h-.8"/><path d="M12.900 2.400L8.100 12.600"/></g></svg>
<span class="t" style="left:308.40px;top:622.40px;font-size:15px;color:#6d7175;letter-spacing:-0.111px;">index.json</span>
<div class="abs" style="left:264px;top:628.6px;width:8px;height:8px;border-radius:4px;background:#b3b7f3"></div>
<svg class="abs" style="left:256px;top:381px;width:20px;height:20px;" viewBox="0 0 20 20"><path fill="none" stroke="#3f4346" stroke-width="1.500" stroke-linejoin="miter" d="M.8.800h6.400l2.300 2.600h9.700v15.800H.8z"/><path fill="none" stroke="#3f4346" stroke-width="1.500" d="M10 7.200v7.300M6.800 11.400l3.200 3.200 3.200-3.200"/></svg>
<span class="t" style="left:289.20px;top:381.85px;font-size:14px;color:#202223;font-weight:bold;letter-spacing:-0.300px;">Templates</span>
<span class="t" style="left:285.00px;top:412.30px;font-size:15px;color:#2c6ecb;letter-spacing:0.018px;">Add a new template</span>
<div class="abs" style="left:502px;top:179px;width:17px;height:475px;background:#f1f1f1"></div>
<div class="abs" style="left:519px;top:179px;width:1px;height:492px;background:#c9d0d7"></div>
<div class="abs" style="left:504px;top:196px;width:13px;height:68px;background:#c1c1c1"></div>
<svg class="abs" style="left:507px;top:186px;width:7px;height:4px;" viewBox="0 0 7 4"><path fill="#a3a3a3" d="M0 4L3.500 0 7 4z"/></svg>
<svg class="abs" style="left:507px;top:643.5px;width:7px;height:4px;" viewBox="0 0 7 4"><path fill="#505050" d="M0 0L3.500 4 7 0z"/></svg>
<div class="abs" style="left:240px;top:654px;width:262px;height:17px;background:#f1f1f1"></div>
<div class="abs" style="left:502px;top:654px;width:17px;height:17px;background:#dcdcdc"></div>
<div class="abs" style="left:257px;top:656px;width:186px;height:13px;background:#c1c1c1"></div>
<svg class="abs" style="left:246.5px;top:659px;width:4px;height:7px;" viewBox="0 0 4 7"><path fill="#a3a3a3" d="M4 0L0 3.500 4 7z"/></svg>
<svg class="abs" style="left:492px;top:659px;width:4px;height:7px;" viewBox="0 0 4 7"><path fill="#505050" d="M0 0L4 3.500 0 7z"/></svg>
<div id="editor"></div>
<span class="t" style="left:537.00px;top:193.35px;font-size:14px;color:#6d7175;letter-spacing:0.073px;">theme.liquid</span>
<span class="t" style="left:668.90px;top:193.35px;font-size:14px;color:#202223;letter-spacing:-0.714px;">base.css</span>
<div class="abs" style="left:736px;top:200px;width:6px;height:6px;border-radius:3px;background:#5c6ac4"></div>
<div class="abs" style="left:520px;top:226px;width:846px;height:1px;background:#d2d5d8"></div>
<div class="abs" style="left:653px;top:223.500px;width:106px;height:2.500px;background:#008060"></div>
<svg class="abs" style="left:1329px;top:192px;width:22px;height:22px;" viewBox="0 0 22 22"><g fill="none" stroke="#4a4e52" stroke-width="1.700"><path d="M10.500 1.800H1.800v8.700M20.200 11.500v8.700h-8.700"/><path d="M1.800 14.500h5.700v5.700H1.800z"/><path d="M12.800 4.300h5v5M17.600 4.500L11 11.100"/></g></svg>
<span class="t" style="left:537.33px;top:237.65px;font-size:14px;color:#202223;letter-spacing:-0.636px;-webkit-text-stroke:0.45px;">base.css</span>
<div class="btn" style="left:1125px;top:234px;width:87px;height:28px"></div>
<div class="btn" style="left:1220px;top:234px;width:73px;height:28px"></div>
<div class="abs" style="left:1301px;top:234px;width:49px;height:28px;border-radius:4px;background:#008060;box-shadow:0 1px 0 rgba(0,0,0,.08)"></div>
<span class="t" style="left:1136.15px;top:238.45px;font-size:14px;color:#202223;letter-spacing:0.220px;-webkit-text-stroke:0.3px;">Delete file</span>
<span class="t" style="left:1230.75px;top:238.45px;font-size:14px;color:#202223;letter-spacing:-0.400px;-webkit-text-stroke:0.3px;">Rename</span>
<span class="t" style="left:1310.95px;top:238.45px;font-size:14px;color:#fff;letter-spacing:-0.667px;-webkit-text-stroke:0.5px;">Save</span>
<div class="abs" style="left:520px;top:269px;width:846px;height:1px;background:#dcdfe3"></div>
<div id="code">
<div id="gutter"></div>
<div class="abs" style="left:50px;top:287px;width:780px;height:14px;background:#f3f5f7"></div>
<div class="ln" style="top:-6.3px">2345</div>
<div class="cl" style="top:-6.3px">  word-break: <span class="o">break-word</span>;</div>
<div class="ln" style="top:7.7px">2346</div>
<div class="cl" style="top:7.7px">}</div>
<div class="ln" style="top:21.7px">2347</div>
<div class="ln" style="top:35.7px">2348</div>
<svg class="abs" style="left:40.500px;top:40.7px;width:6px;height:4px" viewBox="0 0 6 4"><path fill="#8a8d90" d="M0 0h5.600L2.800 3.800z"/></svg>
<div class="cl" style="top:35.7px"><span class="r">.gradient</span> {</div>
<div class="ln" style="top:49.7px">2349</div>
<div class="cl" style="top:49.7px">  <span class="p">background</span>: var(--color-<span class="o">background</span>);</div>
<div class="ln" style="top:63.7px">2350</div>
<div class="cl" style="top:63.7px">  <span class="o">background</span>: var(--gradient-<span class="o">background</span>);</div>
<div class="ln" style="top:77.7px">2351</div>
<div class="cl" style="top:77.7px">  background-attachment: <span class="o">fixed</span>;</div>
<div class="ln" style="top:91.7px">2352</div>
<div class="cl" style="top:91.7px">}</div>
<div class="ln" style="top:105.7px">2353</div>
<div class="ln" style="top:119.7px">2354</div>
<div class="cl" style="top:119.7px"><span class="g">@media screen</span> <span class="v">and</span> (<span class="r">forced-colors</span>: <span class="r2">active</span>) <span class="g2">{</span></div>
<div class="ln" style="top:133.7px">2355</div>
<svg class="abs" style="left:40.500px;top:138.7px;width:6px;height:4px" viewBox="0 0 6 4"><path fill="#8a8d90" d="M0 0h5.600L2.800 3.800z"/></svg>
<div class="cl" style="top:133.7px">  <span class="t">.icon</span> {</div>
<div class="ln" style="top:147.7px">2356</div>
<div class="cl" style="top:147.7px">    <span class="p">color</span>: CanvasText;</div>
<div class="ln" style="top:161.7px">2357</div>
<div class="cl" style="top:161.7px">    <span class="p">fill</span>: CanvasText <span class="v">!important</span>;</div>
<div class="ln" style="top:175.7px">2358</div>
<div class="cl" style="top:175.7px">  }</div>
<div class="ln" style="top:189.7px">2359</div>
<div class="ln" style="top:203.7px">2360</div>
<svg class="abs" style="left:40.500px;top:208.7px;width:6px;height:4px" viewBox="0 0 6 4"><path fill="#8a8d90" d="M0 0h5.600L2.800 3.800z"/></svg>
<div class="cl" style="top:203.7px">  <span class="t">.icon-close-small</span> path {</div>
<div class="ln" style="top:217.7px">2361</div>
<div class="cl" style="top:217.7px">    <span class="p">stroke</span>: CanvasText;</div>
<div class="ln" style="top:231.7px">2362</div>
<div class="ln" style="top:245.7px">2363</div>
<div class="cl" style="top:245.7px">  }</div>
<div class="ln" style="top:259.7px">2364</div>
<div class="ln" style="top:273.7px">2365</div>
<div class="ln" style="top:287.7px">2366</div>
<div class="cl" style="top:287.7px"><span class="t">.page-width</span> <span class="hl">{</span><span class="p">margin</span>: <span class="n">0px</span> <span class="r2">auto</span> <span class="v">!important</span>;<span class="hl">}</span></div>
<div class="abs" style="left:377.300px;top:287px;width:1.500px;height:14px;background:#202223"></div>
</div>
<div class="abs" style="left:1349px;top:270px;width:17px;height:401px;background:#f1f1f1"></div>
<div class="abs" style="left:1351px;top:637px;width:13px;height:17px;background:#c1c1c1"></div>
<svg class="abs" style="left:1354px;top:277px;width:7px;height:4px" viewBox="0 0 7 4"><path fill="#505050" d="M0 4L3.500 0 7 4z"/></svg>
<svg class="abs" style="left:1354px;top:660px;width:7px;height:4px" viewBox="0 0 7 4"><path fill="#505050" d="M0 0L3.500 4 7 0z"/></svg>
<span class="t" style="left:1074.00px;top:652.75px;font-size:19.2px;color:#b4b4b4;letter-spacing:0.320px;z-index:9;">Activate Windows</span>
<span class="t" style="left:1073.00px;top:674.87px;font-size:14.8px;color:#bdbdbd;letter-spacing:0.129px;z-index:9;">Go to Settings to activate Windows.</span>
<div id="dl"></div>
<svg class="abs" style="left:21.5px;top:691px;width:13px;height:17px;" viewBox="0 0 13 17"><path fill="#fff" stroke="#80868b" stroke-width="1" d="M.5.500h8L12.500 4.500v12H.5z"/><path fill="none" stroke="#80868b" stroke-width="1" d="M8.500.5v4h4"/><rect x="3" y="6.500" width="7" height="6" fill="#1756c2"/><path fill="#7fb0f5" d="M3 6.500h3.500L3 9.500z"/><path fill="#0d3f94" d="M3 12.500l2.500-2.500 1.500 1.300 1.200-1L10 12.500z"/></svg>
<span class="t" style="left:48.90px;top:690.05px;font-size:14px;color:#3c4043;letter-spacing:-0.375px;">Untitled (180 × 18....png</span>
<svg class="abs" style="left:208px;top:697px;width:11px;height:7px;" viewBox="0 0 11 7"><path fill="none" stroke="#5f6368" stroke-width="1.600" d="M.8 6l4.700-4.700L10.200 6"/></svg>
<div class="abs" style="left:236px;top:678px;width:1px;height:44px;background:#dadce0"></div>
<svg class="abs" style="left:254.5px;top:691px;width:13px;height:17px;" viewBox="0 0 13 17"><path fill="#fff" stroke="#80868b" stroke-width="1" d="M.5.500h8L12.500 4.500v12H.5z"/><path fill="none" stroke="#80868b" stroke-width="1" d="M8.500.5v4h4"/><rect x="3" y="6.500" width="7" height="6" fill="#1756c2"/><path fill="#7fb0f5" d="M3 6.500h3.500L3 9.500z"/><path fill="#0d3f94" d="M3 12.500l2.500-2.500 1.500 1.300 1.200-1L10 12.500z"/></svg>
<span class="t" style="left:281.90px;top:690.05px;font-size:14px;color:#3c4043;letter-spacing:-0.375px;">Untitled (180 × 18....png</span>
<svg class="abs" style="left:441px;top:697px;width:11px;height:7px;" viewBox="0 0 11 7"><path fill="none" stroke="#5f6368" stroke-width="1.600" d="M.8 6l4.700-4.700L10.200 6"/></svg>
<div class="abs" style="left:469px;top:678px;width:1px;height:44px;background:#dadce0"></div>
<svg class="abs" style="left:487.5px;top:691px;width:13px;height:17px;" viewBox="0 0 13 17"><path fill="#fff" stroke="#80868b" stroke-width="1" d="M.5.500h8L12.500 4.500v12H.5z"/><path fill="none" stroke="#80868b" stroke-width="1" d="M8.500.5v4h4"/><rect x="3" y="6.500" width="7" height="6" fill="#1756c2"/><path fill="#7fb0f5" d="M3 6.500h3.500L3 9.500z"/><path fill="#0d3f94" d="M3 12.500l2.500-2.500 1.500 1.300 1.200-1L10 12.500z"/></svg>
<span class="t" style="left:514.90px;top:690.05px;font-size:14px;color:#3c4043;letter-spacing:-0.341px;">Untitled design (2).png</span>
<svg class="abs" style="left:674px;top:697px;width:11px;height:7px;" viewBox="0 0 11 7"><path fill="none" stroke="#5f6368" stroke-width="1.600" d="M.8 6l4.700-4.700L10.200 6"/></svg>
<div class="abs" style="left:702px;top:678px;width:1px;height:44px;background:#dadce0"></div>
<svg class="abs" style="left:720.5px;top:691px;width:13px;height:17px;" viewBox="0 0 13 17"><path fill="#fff" stroke="#80868b" stroke-width="1" d="M.5.500h8L12.500 4.500v12H.5z"/><path fill="none" stroke="#80868b" stroke-width="1" d="M8.500.5v4h4"/><rect x="3" y="6.500" width="7" height="6" fill="#1756c2"/><path fill="#7fb0f5" d="M3 6.500h3.500L3 9.500z"/><path fill="#0d3f94" d="M3 12.500l2.500-2.500 1.500 1.300 1.200-1L10 12.500z"/></svg>
<span class="t" style="left:747.90px;top:690.05px;font-size:14px;color:#3c4043;letter-spacing:-0.500px;">Bright Coral Hang....png</span>
<svg class="abs" style="left:907px;top:697px;width:11px;height:7px;" viewBox="0 0 11 7"><path fill="none" stroke="#5f6368" stroke-width="1.600" d="M.8 6l4.700-4.700L10.200 6"/></svg>
<div class="abs" style="left:935px;top:678px;width:1px;height:44px;background:#dadce0"></div>
<svg class="abs" style="left:953.5px;top:691px;width:13px;height:17px;" viewBox="0 0 13 17"><path fill="#fff" stroke="#80868b" stroke-width="1" d="M.5.500h8L12.500 4.500v12H.5z"/><path fill="none" stroke="#80868b" stroke-width="1" d="M8.500.5v4h4"/><rect x="3" y="6.500" width="7" height="6" fill="#1756c2"/><path fill="#7fb0f5" d="M3 6.500h3.500L3 9.500z"/><path fill="#0d3f94" d="M3 12.500l2.500-2.500 1.500 1.300 1.200-1L10 12.500z"/></svg>
<span class="t" style="left:980.90px;top:690.05px;font-size:14px;color:#3c4043;letter-spacing:-0.457px;">Gray Minimalist W....png</span>
<svg class="abs" style="left:1140px;top:697px;width:11px;height:7px;" viewBox="0 0 11 7"><path fill="none" stroke="#5f6368" stroke-width="1.600" d="M.8 6l4.700-4.700L10.200 6"/></svg>
<div class="abs" style="left:1168px;top:678px;width:1px;height:44px;background:#dadce0"></div>
<div class="abs" style="left:1252px;top:683px;width:78px;height:32px;border:1px solid #dadce0;border-radius:4px;background:#fff"></div>
<span class="t" style="left:1268.10px;top:688.63px;font-size:13.2px;color:#1a73e8;letter-spacing:-0.514px;-webkit-text-stroke:0.2px;">Show all</span>
<svg class="abs" style="left:1342px;top:693.5px;width:12px;height:11px;" viewBox="0 0 12 11"><path stroke="#5f6368" stroke-width="1.700" d="M1 .5l10 10M11 .5l-10 10"/></svg>
<div id="task"></div>
<div class="abs" style="left:344px;top:728px;width:48px;height:40px;background:#49585f"></div>
<svg class="abs" style="left:16px;top:740px;width:16px;height:16px;" viewBox="0 0 16 16"><path fill="#fff" d="M0 2.300l6.600-.9v6.300H0zM7.400 1.300L16 0v7.700H7.400zM0 8.400h6.600v6.300L0 13.800zM7.400 8.400H16V16l-8.600-1.200z"/></svg>
<svg class="abs" style="left:63px;top:739px;width:18px;height:17px;" viewBox="0 0 18 17"><g fill="none" stroke="#fff" stroke-width="1"><path d="M1.500 5.500h10v6h-10z"/><path d="M1.500 3.500V1.500h10V3.500M1.500 13.500v2h10v-2"/><path d="M15.500 1v3.500M15.500 9v7"/></g><rect x="14" y="5" width="3" height="3" fill="#fff"/></svg>
<svg class="abs" style="left:112px;top:738px;width:22px;height:19px;" viewBox="0 0 22 19"><path fill="#e8a317" d="M.3 1.600a.8.800 0 0 1 .8-.8H8.300l1.400 1.700v1H.3z"/><path fill="#ffd75e" d="M.3 3.200h20.600a.8.800 0 0 1 .8.800v13a.8.800 0 0 1-.8.800H1.100a.8.800 0 0 1-.8-.8z"/><path fill="#fbc94b" d="M.3 10.500h21.400V17a.8.800 0 0 1-.8.800H1.100a.8.800 0 0 1-.8-.8z"/><path fill="#4a9fe8" d="M3.900 17.800v-6a.8.800 0 0 1 .8-.8h12.100a.8.800 0 0 1 .8.800v6h-3.800v-3.500H7.700v3.500z"/></svg>
<svg class="abs" style="left:159.5px;top:736px;width:25px;height:24px;" viewBox="0 0 25 24"><defs><linearGradient id="eg1" x1="0" y1="0" x2="1" y2="1"><stop offset="0" stop-color="#2ba6e6"/><stop offset="1" stop-color="#0c55a0"/></linearGradient><linearGradient id="eg2" x1="0" y1="0.500" x2="1" y2="0.400"><stop offset="0" stop-color="#2bb4ea"/><stop offset="0.550" stop-color="#3cc9b0"/><stop offset="1" stop-color="#6ee24a"/></linearGradient></defs><path fill="url(#eg1)" d="M.8 12C.8 8 5 6 10 6 8 7 6.800 9.500 7.500 13c1 5 6 8 11 6.600 2-.6 3.500-1.600 4.700-3.100C21.500 21 17.500 23.800 12.800 23.800 6 23.800.8 18.500.8 12z"/><path fill="#0b4a90" d="M10 6C7.500 8 7 11 8 14c1.500 4.500 6.500 6.500 11 5.400-4 .6-7.200-1.400-7.800-4.600-.4-2.300.6-4.500 2.600-5.200C12.800 7.600 11.500 6.500 10 6z"/><path fill="url(#eg2)" d="M.8 12C.8 5.500 6 .2 12.500.2c7 0 12 4.800 11.800 10.300-.1 3-2.300 5.300-5.500 5.300-2.300 0-3.600-1-3.400-2.200.2-1 .9-1.500.8-3C16 7.800 13.200 6 10 6 5.500 6 1.300 8.800.8 12z"/></svg>
<svg class="abs" style="left:209.5px;top:736px;width:23px;height:23px;" viewBox="0 0 23 23"><path fill="#fff" stroke="#1e6e42" stroke-width="1" d="M12 3.500h10v16H12z"/><g stroke="#1e6e42" stroke-width="1"><path d="M12 6.700h10M12 9.900h10M12 13.100h10M12 16.300h10M17.300 3.500v16"/></g><path fill="#1e6e42" d="M0 2.500L14 0v23L0 20.500z"/><path fill="none" stroke="#fff" stroke-width="1.800" d="M4.300 7.800l5 7.600M9.300 7.800l-5 7.600"/></svg>
<svg class="abs" style="left:257.5px;top:736px;width:25px;height:23px;" viewBox="0 0 25 23"><path fill="#0f5fb3" d="M12.500 0L24.500 7.500v2H.5v-2z"/><path fill="#fff" d="M3 6.500h19v9H3z"/><path fill="#1c8fe0" d="M.5 7.500l12 8 12-8v15.500H.5z"/><path fill="#4fc3f7" d="M.5 23l12-9 12 9z"/></svg>
<svg class="abs" style="left:307px;top:736px;width:25px;height:24px;" viewBox="0 0 25 24"><path fill="#dfe7ee" d="M10.500 6C4.500 6 .5 10 .5 14.500c0 3.500 2.600 6 6 6 1.800 0 2.300-1 3.300-1s1.200 1.500 3.400 1.500c4.500 0 8.300-3.600 8.300-8 0-4.200-4.500-7-11-7z"/><circle cx="5" cy="13.500" r="1.700" fill="#e5432d"/><circle cx="8" cy="9.700" r="1.700" fill="#4caf50"/><circle cx="13" cy="8.700" r="1.700" fill="#f5b400"/><circle cx="10.500" cy="16" r="1.900" fill="#1d2e37"/><path stroke="#d98a2b" stroke-width="2" d="M21.500 3.500L13.500 22"/><path fill="#e8c9a0" d="M20.200 1.200l3.300.8-1.300 4.400-2.500-1z"/></svg>
<svg class="abs" style="left:357px;top:737px;width:22px;height:22px;" viewBox="0 0 22 22"><circle cx="11" cy="11" r="11" fill="#fff"/><path fill="#ea4335" d="M11 0a11 11 0 0 1 9.500 5.500H11a5.500 5.500 0 0 0-5.200 3.700L1.600 5.300A11 11 0 0 1 11 0z"/><path fill="#fbbc05" d="M20.500 5.500a11 11 0 0 1-9 16.500l4.500-8a5.500 5.500 0 0 0 0-5.500l-.4-3z"/><path fill="#34a853" d="M11.500 22A11 11 0 0 1 1.600 5.300l4.600 8a5.500 5.500 0 0 0 6.500 3l2.300-1.300z"/><circle cx="11" cy="11" r="5" fill="#fff"/><circle cx="11" cy="11" r="4" fill="#4285f4"/></svg>
<svg class="abs" style="left:405.5px;top:736px;width:23px;height:23px;" viewBox="0 0 23 23"><path fill="#fff" stroke="#2b579a" stroke-width="1" d="M12 3.500h10v16H12z"/><g stroke="#2b579a" stroke-width="1.100"><path d="M14 6.300h6.500M14 8.500h6.500M14 10.700h6.500M14 12.900h6.500M14 15.100h6.500M14 17.300h6.500"/></g><path fill="#2b579a" d="M0 2.500L14 0v23L0 20.500z"/><path fill="none" stroke="#fff" stroke-width="1.500" stroke-linejoin="miter" d="M2.800 8l1.800 7L7 8.500 9.400 15l1.800-7"/></svg>
<svg class="abs" style="left:454.5px;top:736px;width:23px;height:24px;" viewBox="0 0 23 24"><ellipse cx="11.500" cy="12" rx="11.300" ry="11.800" fill="#e0162b"/><ellipse cx="11.500" cy="12" rx="4.700" ry="8.600" fill="#1e313a"/></svg>
<div class="abs" style="left:103px;top:766px;width:32px;height:2px;background:#85c1f0"></div>
<div class="abs" style="left:152px;top:766px;width:40px;height:2px;background:#85c1f0"></div>
<div class="abs" style="left:250px;top:766px;width:40px;height:2px;background:#85c1f0"></div>
<div class="abs" style="left:299px;top:766px;width:40px;height:2px;background:#85c1f0"></div>
<div class="abs" style="left:344px;top:766px;width:48px;height:2px;background:#85c1f0"></div>
<div class="abs" style="left:397px;top:766px;width:40px;height:2px;background:#85c1f0"></div>
<div class="abs" style="left:446px;top:766px;width:40px;height:2px;background:#85c1f0"></div>
<div class="abs" style="left:135px;top:766px;width:8px;height:2px;background:#5f93bd"></div>
<svg class="abs" style="left:983px;top:737px;width:24px;height:21px;" viewBox="0 0 24 21"><path fill="#ffc83d" d="M9.500.3c-.8 1.400-.6 3.300.7 4.700 1.400 1.500 3.600 1.800 5.300.9C15 8.500 12.800 10.300 10 10.300c-3.200 0-5.600-2.400-5.600-5.300C4.400 2.700 6.600.8 9.500.3z" transform="translate(-2 0)"/><path fill="#e8eef4" d="M7 20.500a4.500 4.500 0 0 1-.6-9 6 6 0 0 1 11.300 1.200A4 4 0 0 1 18.500 20.500z"/></svg>
<span class="t" style="left:1013.90px;top:739.69px;font-size:13.6px;color:#fff;letter-spacing:-0.333px;">16°C</span>
<span class="t" style="left:1052.00px;top:739.46px;font-size:13.1px;color:#fff;direction:rtl;">غائم جزئيًا</span>
<svg class="abs" style="left:1123px;top:744px;width:13px;height:8px;" viewBox="0 0 13 8"><path fill="none" stroke="#fff" stroke-width="1.300" d="M.8 7l5.700-5.700L12.200 7"/></svg>
<svg class="abs" style="left:1147px;top:739px;width:13px;height:19px;" viewBox="0 0 13 19"><g fill="none" stroke="#fff" stroke-width="1.100"><path d="M2 2.800C4.500.8 8.500.8 11 2.800M2 16.200c2.500 2 6.500 2 9 0"/><rect x="1" y="5.500" width="7.500" height="8" rx="1.500"/><path d="M8.500 8.500l3.500-2v6l-3.500-2"/></g></svg>
<svg class="abs" style="left:1168px;top:741px;width:18px;height:15px;" viewBox="0 0 18 15"><g fill="none" stroke="#fff" stroke-width="1.100"><path d="M1 5.300h2.700L7.500 1.500v12L3.700 9.700H1z"/><path d="M10 5c1.300 1.300 1.300 3.700 0 5M12.300 3c2.400 2.400 2.400 6.600 0 9M14.600 1c3.500 3.500 3.500 9.500 0 13"/></g></svg>
<svg class="abs" style="left:1195px;top:741px;width:15px;height:15px;" viewBox="0 0 15 15"><g fill="none" stroke="#fff" stroke-width="1.200"><path d="M1 14A13 13 0 0 1 14 1" opacity=".55"/><path d="M4.500 14A9.500 9.500 0 0 1 14 4.500"/><path d="M8 14a6 6 0 0 1 6-6"/></g><circle cx="12.500" cy="12.800" r="1.600" fill="#fff"/></svg>
<span class="t" style="left:1218.90px;top:737.84px;font-size:12px;color:#fff;letter-spacing:-0.900px;">ENG</span>
<span class="t" style="left:1257.40px;top:729.64px;font-size:12px;color:#fff;letter-spacing:-0.343px;">12:52 PM</span>
<span class="t" style="left:1255.00px;top:746.64px;font-size:12px;color:#fff;letter-spacing:-0.150px;">3/10/2022</span>
<svg class="abs" style="left:1325px;top:740px;width:17px;height:16px;" viewBox="0 0 17 16"><path fill="#fff" d="M.5.500h15v11.500H6.500L3 15v-3H.5z"/><path stroke="#1b2538" stroke-width="1" d="M3.500 3.500h9M3.500 6h9M3.500 8.500h9"/></svg>
<div class="abs" style="left:1332px;top:747px;width:16px;height:16px;border-radius:8px;background:#222;border:1px solid #bbb"></div>
<div class="abs" style="left:1361px;top:728px;width:1px;height:40px;background:#4b566a"></div>
<span class="t" style="left:1337.70px;top:745.49px;font-size:11px;color:#fff;font-weight:bold;">1</span>
</body>
</html>
